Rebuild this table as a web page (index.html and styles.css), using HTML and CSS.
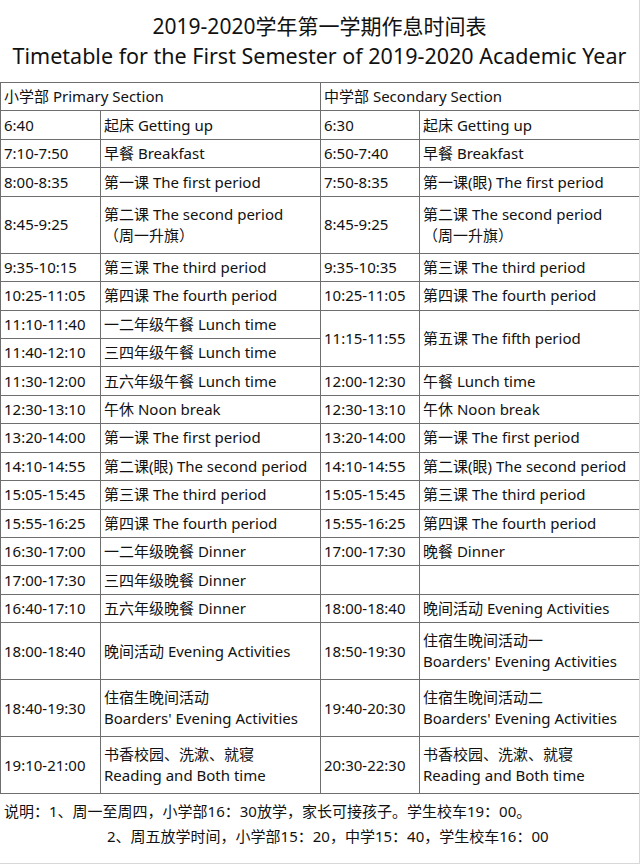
FILE: index.html
```html
<!DOCTYPE html>
<html lang="zh">
<head>
<meta charset="utf-8">
<link rel="stylesheet" href="styles.css">
</head>
<body>
<div class="page">
  <header class="title">
    <div class="t1">2019-2020学年第一学期作息时间表</div>
    <div class="t2">Timetable for the First Semester of 2019-2020 Academic Year</div>
  </header>
  <table class="tt">
    <colgroup><col class="c1"><col class="c2"><col class="c3"><col class="c4"></colgroup>
    <tr class="r"><td colspan="2">小学部 Primary Section</td><td colspan="2">中学部 Secondary Section</td></tr>
    <tr class="r"><td>6:40</td><td>起床 Getting up</td><td>6:30</td><td>起床 Getting up</td></tr>
    <tr class="r"><td>7:10-7:50</td><td>早餐 Breakfast</td><td>6:50-7:40</td><td>早餐 Breakfast</td></tr>
    <tr class="r"><td>8:00-8:35</td><td>第一课 The first period</td><td>7:50-8:35</td><td>第一课(眼) The first period</td></tr>
    <tr class="d"><td>8:45-9:25</td><td>第二课 The second period<br>（周一升旗）</td><td>8:45-9:25</td><td>第二课 The second period<br>（周一升旗）</td></tr>
    <tr class="r"><td>9:35-10:15</td><td>第三课 The third period</td><td>9:35-10:35</td><td>第三课 The third period</td></tr>
    <tr class="r"><td>10:25-11:05</td><td>第四课 The fourth period</td><td>10:25-11:05</td><td>第四课 The fourth period</td></tr>
    <tr class="r"><td>11:10-11:40</td><td>一二年级午餐 Lunch time</td><td rowspan="2">11:15-11:55</td><td rowspan="2">第五课 The fifth period</td></tr>
    <tr class="r"><td>11:40-12:10</td><td>三四年级午餐 Lunch time</td></tr>
    <tr class="r"><td>11:30-12:00</td><td>五六年级午餐 Lunch time</td><td>12:00-12:30</td><td>午餐 Lunch time</td></tr>
    <tr class="r"><td>12:30-13:10</td><td>午休 Noon break</td><td>12:30-13:10</td><td>午休 Noon break</td></tr>
    <tr class="r"><td>13:20-14:00</td><td>第一课 The first period</td><td>13:20-14:00</td><td>第一课 The first period</td></tr>
    <tr class="r"><td>14:10-14:55</td><td>第二课(眼) The second period</td><td>14:10-14:55</td><td>第二课(眼) The second period</td></tr>
    <tr class="r"><td>15:05-15:45</td><td>第三课 The third period</td><td>15:05-15:45</td><td>第三课 The third period</td></tr>
    <tr class="r"><td>15:55-16:25</td><td>第四课 The fourth period</td><td>15:55-16:25</td><td>第四课 The fourth period</td></tr>
    <tr class="r"><td>16:30-17:00</td><td>一二年级晚餐 Dinner</td><td>17:00-17:30</td><td>晚餐 Dinner</td></tr>
    <tr class="r"><td>17:00-17:30</td><td>三四年级晚餐 Dinner</td><td></td><td></td></tr>
    <tr class="r"><td>16:40-17:10</td><td>五六年级晚餐 Dinner</td><td>18:00-18:40</td><td>晚间活动 Evening Activities</td></tr>
    <tr class="d"><td>18:00-18:40</td><td>晚间活动 Evening Activities</td><td>18:50-19:30</td><td>住宿生晚间活动一<br>Boarders' Evening Activities</td></tr>
    <tr class="d"><td>18:40-19:30</td><td>住宿生晚间活动<br>Boarders' Evening Activities</td><td>19:40-20:30</td><td>住宿生晚间活动二<br>Boarders' Evening Activities</td></tr>
    <tr class="d"><td>19:10-21:00</td><td>书香校园、洗漱、就寝<br>Reading and Both time</td><td>20:30-22:30</td><td>书香校园、洗漱、就寝<br>Reading and Both time</td></tr>
  </table>
  <div class="notes">
    <div class="n1">说明：1、周一至周四，小学部16：30放学，家长可接孩子。学生校车19：00。</div>
    <div class="n2">2、周五放学时间，小学部15：20，中学15：40，学生校车16：00</div>
  </div>
</div>
</body>
</html>
```

FILE: styles.css
```css
html, body {
  margin: 0;
  padding: 0;
  background: #fff;
}
body {
  font-family: "Noto Sans", "Noto Sans CJK SC", sans-serif;
  color: #111;
}
.page {
  width: 640px;
  height: 864px;
  box-sizing: border-box;
  border-right: 1px solid #d8d8d8;
  border-bottom: 1px solid #d8d8d8;
  overflow: hidden;
}
.title {
  height: 82px;
  box-sizing: border-box;
  padding-top: 11px;
  text-align: center;
}
.t1 {
  font-size: 21px;
  line-height: 30px;
}
.t2 {
  font-size: 21.5px;
  line-height: 30px;
}
.tt {
  width: 640px;
  border-collapse: collapse;
  table-layout: fixed;
  font-size: 15px;
}
.c1 { width: 100px; }
.c2 { width: 220px; }
.c3 { width: 99px; }
.c4 { width: 221px; }
.tt td {
  border: 1px solid #6e6e6e;
  padding: 0 0 0 3px;
  vertical-align: middle;
  white-space: nowrap;
  overflow: hidden;
  line-height: 21px;
}
.tt tr.r { height: 28.44px; }
.tt tr.d { height: 56.88px; }
.notes {
  padding-top: 5px;
  font-size: 15px;
  line-height: 25px;
  padding-left: 4px;
}
.n2 {
  padding-left: 103px;
}
```
